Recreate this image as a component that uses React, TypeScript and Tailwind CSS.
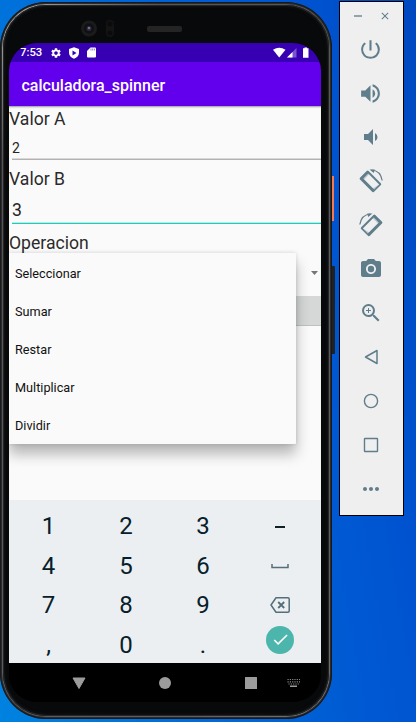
import type { ReactNode } from "react";
import {
  MdCheck,
  MdClose,
  MdMoreHoriz,
  MdPhotoCamera,
  MdPowerSettingsNew,
  MdSettings,
  MdVolumeDown,
  MdVolumeUp,
  MdZoomIn,
} from "react-icons/md";

const operations = ["Seleccionar", "Sumar", "Restar", "Multiplicar", "Dividir"];

function StatusBar() {
  return (
    <div className="flex h-[19px] items-center bg-[#3700b3] pl-[11px] pr-[10px] text-white">
      <span className="w-[30px] text-[11.3px] font-medium leading-[20px]">7:53</span>
      <MdSettings size={12} />
      <svg className="ml-[6px]" width="12" height="12" viewBox="0 0 24 24">
        <path
          fill="currentColor"
          fillRule="evenodd"
          d="M12 0.5 2 4v7.5c0 5.5 4.2 10 10 12 5.8-2 10-6.5 10-12V4zM9 7l8 5-8 5z"
        />
      </svg>
      <svg className="ml-[7px]" width="9" height="11" viewBox="0 0 9 11">
        <path fill="currentColor" d="M3.5.5H8q1 0 1 1V9.5q0 1-1 1H1q-1 0-1-1V4z" />
        <path stroke="#3700b3" strokeWidth=".5" d="M4 1.5v2M5.7 1.5v2M7.4 1.5v2" />
      </svg>
      <svg className="ml-auto" width="38" height="12" viewBox="0 0 38 12">
        <path fill="white" d="M0 2.8Q6.2-1.2 12.5 2.8L6.2 10.5Z" />
        <path fill="#7b55cd" d="M14 10.5 23.5 1v9.5Z" />
        <path fill="white" d="M14 10.5 19.5 5v5.5Z" />
        <path fill="white" d="M30 1.3h1.5V.5h2.5v.8h1.5v9.4H30Z" />
      </svg>
    </div>
  );
}

function Label({ children, className }: { children: ReactNode; className: string }) {
  return <div className={`text-[17.6px] text-[#2b2b2b] ${className}`}>{children}</div>;
}

function Form() {
  return (
    <div className="relative h-[394px] bg-[#fafafa] shadow-[inset_0_2px_2px_-1px_#999]">
      <Label className="h-[26px] pt-[2px] leading-[22px]">Valor A</Label>
      <div className="ml-[3px] h-[27px] pt-[6px] text-[14px] leading-[20px] text-[#252525] shadow-[inset_0_-1px_#d8d8d8,0_1px_#b2b2b2]">
        2
      </div>
      <Label className="h-[31px] pt-[9px] leading-[22px]">Valor B</Label>
      <div className="ml-[3px] h-[34px] pt-[10px] text-[17.6px] leading-[20px] text-[#252525] shadow-[inset_0_-1px_#20cbb8,inset_0_-2px_#b5ece6]">
        3
      </div>
      <Label className="h-[37px] pt-[8px] leading-[22px]">Operacion</Label>
      <div className="flex h-[35px] justify-end pr-[3px] pt-[10px]">
        <svg width="7" height="4" viewBox="0 0 7 4">
          <path fill="#757575" d="M0 0h7L3.5 4z" />
        </svg>
      </div>
      <div className="h-[30px] border-b border-[#bfc1c1] bg-[#d6d7d7]" />
      <ul className="absolute left-0 top-[147px] h-[191px] w-[287px] rounded-r-[1px] bg-[#fafafa] text-[12.7px] text-[#111] shadow-[0_10px_14px_rgba(0,0,0,0.28),0_0_4px_rgba(0,0,0,0.14)]">
        {operations.map((name) => (
          <li key={name} className="flex h-[38px] items-center pl-[6px] pt-[3px]">
            {name}
          </li>
        ))}
      </ul>
    </div>
  );
}

function SpaceIcon() {
  return (
    <svg width="18" height="20" viewBox="0 0 18 20" fill="none" stroke="#546e7a" strokeWidth="1.5">
      <path d="M1 8v3.5h16V8" />
    </svg>
  );
}

function DeleteIcon() {
  return (
    <svg width="20" height="16" viewBox="0 0 20 16" fill="none" stroke="#546e7a" strokeWidth="1.5">
      <path strokeLinejoin="round" d="M6 .8H18q1.2 0 1.2 1.2v12q0 1.2-1.2 1.2H6L1 8z" />
      <path strokeWidth="1.8" d="m8.2 5 6 6m0-6-6 6" />
    </svg>
  );
}

function Keyboard() {
  const keys: ReactNode[] = [
    "1", "2", "3", <span className="mt-[1px] h-[2px] w-[10px] bg-[#102027]" />,
    "4", "5", "6", <SpaceIcon />,
    "7", "8", "9", <DeleteIcon />,
    ",", "0", ".",
    <span className="mb-[10px] flex h-[28px] w-[28px] shrink-0 items-center justify-center rounded-full bg-[#4db6ac] text-white">
      <MdCheck size={19} />
    </span>,
  ];
  return (
    <div className="grid h-[163px] grid-cols-[79px_76px_78px_76px] grid-rows-[40px_39px_40px_39px] bg-[#eceff1] pt-[6px] text-[24px] text-[#06202b]">
      {keys.map((key, index) => (
        <div key={index} className="flex items-center justify-center leading-none">
          {key}
        </div>
      ))}
    </div>
  );
}

function NavBar() {
  return (
    <svg className="h-[39px] w-[312px] bg-black" viewBox="0 0 312 39">
      <g fill="#9c9c9c">
        <path d="M64 15h12l-6 10.5z" stroke="#9c9c9c" strokeLinejoin="round" />
        <circle cx="156" cy="20" r="6" />
        <rect x="236" y="14" width="12" height="12" rx=".5" />
        <path d="M281 22.5h7v1.5h-7z" />
      </g>
      <path
        stroke="#8a8a8a"
        strokeWidth="1.2"
        strokeDasharray="1.2 1.1"
        d="M278.5 16.5h12.5M278.5 18.8h12.5M279.5 21h10.5"
      />
    </svg>
  );
}

function Phone() {
  return (
    <main className="relative mt-[2px] h-[717px] w-[332px] shrink-0">
      <div className="h-full rounded-[46px] bg-[#292b2d] p-[2px] shadow-[inset_0_0_0_1px_#17191b]">
        <div className="h-full rounded-[44px] bg-[linear-gradient(135deg,#b8b8b8_0%,#858585_6%,#555_15%,#5c5d5f_85%,#747474_100%)] p-[1px]">
          <div className="h-full rounded-[43px] bg-[#08090a] px-[6px] pt-px shadow-[inset_0_0_0_1px_#242527,inset_0_0_4px_#222]">
            <div className="h-[37px]">
              <svg className="ml-[63px]" width="110" height="37" viewBox="0 0 110 37">
                <circle cx="17" cy="22.5" r="8" fill="#1b1b1b" />
                <circle cx="17" cy="22.5" r="5" fill="#101014" />
                <circle cx="17" cy="22.5" r="2.5" fill="#303043" />
                <circle cx="17" cy="22" r="1" fill="#8585b0" />
                <rect x="34" y="14" width="8" height="17" rx="4" fill="#141414" />
                <circle cx="38" cy="18" r="2.5" fill="#0b0b0b" />
                <circle cx="38" cy="27" r="2.5" fill="#0b0b0b" />
                <rect x="75" y="20" width="35" height="6" rx="2" fill="#242424" />
              </svg>
            </div>
            <div className="h-[659px] w-[312px] overflow-hidden rounded-[28px] bg-black">
              <StatusBar />
              <header className="h-[44px] bg-[#6200ee] pl-[12.5px] text-[16px] font-medium leading-[47px] text-white">
                calculadora_spinner
              </header>
              <Form />
              <Keyboard />
              <NavBar />
            </div>
          </div>
        </div>
      </div>
      <span className="absolute left-[332px] top-[174px] h-[45px] w-[2px] bg-[#f87951]" />
      <span className="absolute left-[332px] top-[264px] h-[88px] w-[3px] rounded-r-[1px] bg-[#202123]" />
    </main>
  );
}

function RotateIcon({ mirrored = false }: { mirrored?: boolean }) {
  return (
    <svg
      width="24"
      height="24"
      viewBox="0 0 24 24"
      className={mirrored ? "-scale-x-100" : ""}
      fill="currentColor"
    >
      <path
        fillRule="evenodd"
        d="M7.8 2q.9-.9 1.800 0l12.200 12.200q.9.9 0 1.800l-6.800 6.800q-.9.9-1.800 0L1 10.600q-.9-.9 0-1.800zM9.200 4.400 4.200 9.400 15.200 20.400 20.200 15.400z"
      />
      <path d="M8.200 1.800 11 4.600 4 11.600 1.200 8.800zM21.400 14.400l1 1-8.200 8.200-2.600-2.600z" opacity=".35" />
      <path d="m10.500.4 5.3.2-1 3.400z" />
      <path fill="none" stroke="currentColor" strokeWidth="1.2" d="M12.500 1Q21.5 1.5 23.2 11.5" />
    </svg>
  );
}

function EmulatorToolbar() {
  const icons = [
    <MdPowerSettingsNew size={25} />,
    <MdVolumeUp size={25} />,
    <MdVolumeDown size={24} />,
    <RotateIcon />,
    <RotateIcon mirrored />,
    <MdPhotoCamera size={24} />,
    <MdZoomIn size={24} />,
    <svg width="24" height="24" viewBox="0 0 24 24" fill="none" stroke="currentColor" strokeWidth="1.5">
      <path strokeLinejoin="round" d="M18 5.5v13L6.5 12z" />
    </svg>,
    <svg width="24" height="24" viewBox="0 0 24 24" fill="none" stroke="currentColor" strokeWidth="1.4">
      <circle cx="12" cy="12" r="6.6" />
    </svg>,
    <svg width="24" height="24" viewBox="0 0 24 24" fill="none" stroke="currentColor" strokeWidth="1.4">
      <rect x="5.5" y="5.5" width="13" height="13" rx=".5" />
    </svg>,
    <MdMoreHoriz size={24} />,
  ];
  return (
    <aside className="ml-[7px] mt-px h-[515px] w-[65px] shrink-0 border border-black bg-[#efefef] text-[#607d8b]">
      <div className="flex h-[25px] items-center justify-between pl-[14px] pr-[12px] pt-[3px]">
        <span className="h-[2px] w-[8px] bg-[#90a4ae]" />
        <MdClose size={12} />
      </div>
      {icons.map((icon, index) => (
        <div key={index} className="flex h-[44px] items-center justify-center pr-[2px]">
          {icon}
        </div>
      ))}
    </aside>
  );
}

export default function App() {
  return (
    <div className="flex h-[722px] w-[416px] items-start overflow-hidden bg-[linear-gradient(80deg,#0082e0_0%,#0068d8_40%,#0053d0_80%,#0048bf_100%)] font-['Roboto','Liberation_Sans',sans-serif]">
      <Phone />
      <EmulatorToolbar />
    </div>
  );
}
